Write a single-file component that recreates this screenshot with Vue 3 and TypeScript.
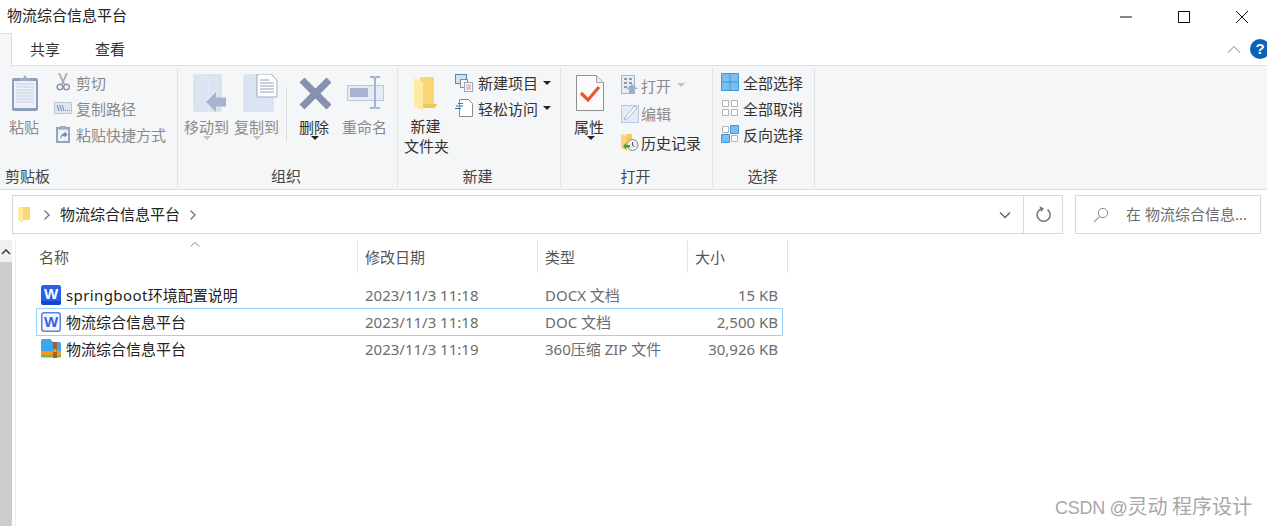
<script setup lang="ts">
interface Row { prefix?: string; name: string; date: string; type: string; size: string; kind: string; selected?: boolean }
const rows: Row[] = [
  { prefix: 'springboot', name: '环境配置说明', date: '2023/11/3 11:18', type: 'DOCX 文档', size: '15 KB', kind: 'docx' },
  { name: '物流综合信息平台', date: '2023/11/3 11:18', type: 'DOC 文档', size: '2,500 KB', kind: 'doc', selected: true },
  { name: '物流综合信息平台', date: '2023/11/3 11:19', type: '360压缩 ZIP 文件', size: '30,926 KB', kind: 'zip' },
]
const columns = [
  { label: '名称', cls: 'c-name' },
  { label: '修改日期', cls: 'c-date' },
  { label: '类型', cls: 'c-type' },
  { label: '大小', cls: 'c-size' },
]
</script>

<template>
  <div class="window">
    <header class="titlebar">
      <span class="title">物流综合信息平台</span>
      <div class="controls">
        <span class="ctl"><svg width="14" height="14" viewBox="0 0 14 14"><path d="M1 7h12" stroke="#111" fill="none" /></svg></span>
        <span class="ctl"><svg width="14" height="14" viewBox="0 0 14 14"><rect x="1.5" y="1.5" width="11" height="11" stroke="#111" fill="none" /></svg></span>
        <span class="ctl"><svg width="14" height="14" viewBox="0 0 14 14"><path d="M1 1l12 12M13 1L1 13" stroke="#111" fill="none" /></svg></span>
      </div>
    </header>

    <nav class="tabs">
      <span class="tab-stub"></span>
      <span class="tab first">共享</span>
      <span class="tab">查看</span>
      <span class="tabs-right">
        <svg class="collapse" width="14" height="8" viewBox="0 0 14 8"><path d="M1 7.5L7 1.5l6 6" stroke="#b5b5b5" fill="none" stroke-width="1.2" /></svg>
        <span class="help">?</span>
      </span>
    </nav>

    <section class="ribbon">
      <!-- 剪贴板 -->
      <div class="group g-clip">
        <div class="group-body">
          <div class="big dim w48">
            <svg width="48" height="41" viewBox="0 74 48 41">
              <rect x="12" y="78" width="26" height="33" rx="2" fill="#8d9dbd" />
              <rect x="14" y="81" width="22" height="27" fill="#edf0f7" />
              <path d="M16 84h18M16 87h18M16 90h18M16 93h18M16 96h18M16 99h18M16 102h18" stroke="#c8d0e2" />
              <path d="M20 80v-2h3l2-3 2 3h3v3H20z" fill="#9fadc8" />
            </svg>
            <span class="lbl">粘贴</span>
          </div>
          <div class="smalls s26 clip-smalls">
            <div class="small dim">
              <svg class="ic" viewBox="0 0 18 18"><path d="M5 0l5 11M13 0L8 11" stroke="#a4a9b3" stroke-width="1.8" fill="none" /><circle cx="6" cy="14" r="2.8" stroke="#8d96a8" stroke-width="1.5" fill="none" /><circle cx="12.5" cy="14" r="2.8" stroke="#8d96a8" stroke-width="1.5" fill="none" /></svg>
              <span>剪切</span>
            </div>
            <div class="small dim">
              <svg class="ic" viewBox="0 0 18 18"><rect x=".5" y="3.5" width="17" height="11" fill="#dde5f1" stroke="#b9c5da" /><path d="M3 6l2 6M5.5 6l2 6M8 6l2 6" stroke="#7c89a5" fill="none" /><path d="M11 11.5h1M13 11.5h1M15 11.5h1" stroke="#7c89a5" /></svg>
              <span>复制路径</span>
            </div>
            <div class="small dim">
              <svg class="ic" viewBox="0 0 18 18"><rect x="2" y="2" width="14" height="16" fill="#94a5c2" /><rect x="4" y="4.5" width="10" height="11.5" fill="#eef1f7" /><path d="M6 1h6v3H6z" fill="#9eadc8" /><path d="M6.5 14c0-4 2-5.500 4-5.500V6.500l3 3-3 3v-2c-1.500 0-3 1-4 3.500z" fill="#6f83a8" /></svg>
              <span>粘贴快捷方式</span>
            </div>
          </div>
        </div>
        <div class="group-label left">剪贴板</div>
      </div>

      <!-- 组织 -->
      <div class="group g-org">
        <div class="group-body">
          <div class="big dim w45">
            <svg width="45" height="41" viewBox="184 74 45 41">
              <path d="M194 75h27v36h-27z" fill="#dbe4f2" stroke="#cfdaeb" />
              <path d="M196 75l12 3v33" fill="none" stroke="#e6edf7" />
              <path d="M206 102l10-10v5.500h10v9h-10v5.500z" fill="#a6b4cf" />
            </svg>
            <span class="lbl">移动到</span>
            <i class="caret gray"></i>
          </div>
          <div class="big dim w45 ml5">
            <svg width="45" height="41" viewBox="234 74 45 41">
              <path d="M244 75h29v36h-29z" fill="#dbe4f2" stroke="#cfdaeb" />
              <path d="M257 74h14l6 6v17h-20z" fill="#fff" stroke="#9aa9c5" />
              <path d="M260 80h9M260 83h14M260 86h14M260 89h14M260 92h14" stroke="#8fa0bf" />
            </svg>
            <span class="lbl">复制到</span>
            <i class="caret gray"></i>
          </div>
          <span class="vsep"></span>
          <div class="big w30">
            <svg width="34" height="41" viewBox="297 74 34 41">
              <path d="M302 80l27 27M329 80l-27 27" stroke="#8591ad" stroke-width="7" fill="none" />
            </svg>
            <span class="lbl">删除</span>
            <i class="caret nudge1"></i>
          </div>
          <div class="big dim w45 ml13">
            <svg width="45" height="41" viewBox="342 74 45 41">
              <rect x="347.500" y="85.500" width="36" height="15" fill="#e6ecf6" stroke="#bac7de" />
              <rect x="350" y="88" width="18" height="9" fill="#a6b4cf" />
              <path d="M370 77h3c1 0 2 1 2 2 0-1 1-2 2-2h3M370 108h3c1 0 2-1 2-2 0 1 1 2 2 2h3M375 79v27" fill="none" stroke="#a6b4cf" stroke-width="2" />
            </svg>
            <span class="lbl">重命名</span>
          </div>
        </div>
        <div class="group-label">组织</div>
      </div>

      <!-- 新建 -->
      <div class="group g-new">
        <div class="group-body">
          <div class="big w45">
            <svg width="45" height="41" viewBox="404 74 45 41">
              <path d="M420 77h14v30h3v-3l-3 3h-20l6-30z" fill="#fde08a" />
              <path d="M420 77h14v31h-14z" fill="#f9d874" />
              <path d="M414 78l9 5v28l-9-5z" fill="#ffe9a6" />
              <path d="M423 104h14l-3 4h-11z" fill="#efc65e" />
            </svg>
            <span class="lbl tight"><span class="first-line">新建</span>文件夹</span>
          </div>
          <div class="smalls s25 new-smalls">
            <div class="small">
              <svg class="ic" viewBox="0 0 18 18"><rect x=".5" y=".5" width="11" height="9" fill="#cfe0ee" stroke="#4d8cb8" /><rect x="5.500" y="5.500" width="7" height="8" fill="#f4f4f4" stroke="#8a8a8a" /><rect x="9.500" y="8.500" width="8" height="9" fill="#fff" stroke="#98a6c4" /><path d="M11 11h5M11 13h5M11 15h5" stroke="#d08a8a" /></svg>
              <span>新建项目</span><i class="caret inline"></i>
            </div>
            <div class="small">
              <svg class="ic" viewBox="0 0 18 18"><path d="M4.500.5h9l4 4v13h-13z" fill="#fff" stroke="#8a8a8a" /><path d="M1 7h7M3 4.500h5M0 9.500h6" stroke="#2c74b5" fill="none" /></svg>
              <span>轻松访问</span><i class="caret inline"></i>
            </div>
          </div>
        </div>
        <div class="group-label">新建</div>
      </div>

      <!-- 打开 -->
      <div class="group g-open">
        <div class="group-body">
          <div class="big w38">
            <svg width="38" height="41" viewBox="570 74 38 41">
              <path d="M576.500 75.500h20l7 7v28h-27z" fill="#fbfbfb" stroke="#8f8f8f" />
              <path d="M596.500 75.500v7h7" fill="#e8e8e8" stroke="#a5a5a5" />
              <path d="M581 93l7 7 11-13" stroke="#e8592b" stroke-width="3.200" fill="none" />
            </svg>
            <span class="lbl">属性</span>
            <i class="caret nudge2"></i>
          </div>
          <div class="smalls s28 open-smalls">
            <div class="small dim">
              <svg class="ic tall" viewBox="0 0 18 20"><rect x=".5" y=".5" width="13" height="18" fill="#e6ebf4" stroke="#a7b5cf" /><path d="M3 4h3M3 8h3M3 12h3M8 4h3M8 8h3" stroke="#8b9ab8" stroke-width="2" /><path d="M11 9l6 5h-3v5h-6v-5H5z" fill="#9fb0cd" /></svg>
              <span>打开</span><i class="caret inline gray"></i>
            </div>
            <div class="small dim">
              <svg class="ic" viewBox="0 0 18 18"><path d="M.5.500h12l5 0v17H.5z" fill="#e5ebf5" stroke="#bcc8de" /><path d="M3 15l2-4 9-10 2 2-9 10z" fill="#fff" stroke="#a7b5cf" /></svg>
              <span>编辑</span>
            </div>
            <div class="small">
              <svg class="ic" viewBox="0 0 18 18"><path d="M0 1l6 2v15l-6-3z" fill="#f9d874" /><path d="M5 1h6v8H5z" fill="#f4ca63" /><circle cx="11.500" cy="12" r="5.500" fill="#eee" stroke="#8b8b8b" /><path d="M11.500 9v3.500l2 1" stroke="#555" fill="none" /><path d="M2 13l3-3v2h4v2.500H5v2z" fill="#3aa63a" /></svg>
              <span>历史记录</span>
            </div>
          </div>
        </div>
        <div class="group-label">打开</div>
      </div>

      <!-- 选择 -->
      <div class="group g-sel">
        <div class="group-body">
          <div class="smalls s26 sel-smalls">
            <div class="small">
              <svg class="ic" viewBox="0 0 18 18"><path d="M.5.500h17v17H.5zM9 .5v17M.5 9h17" fill="#7cbcee" stroke="#3a99e0" /></svg>
              <span>全部选择</span>
            </div>
            <div class="small">
              <svg class="ic" viewBox="0 0 18 18"><path d="M1.500 1.500h6v6h-6zM10.500 1.500h6v6h-6zM1.500 10.500h6v6h-6zM10.500 10.500h6v6h-6z" fill="#fff" stroke="#b3b3b3" /></svg>
              <span>全部取消</span>
            </div>
            <div class="small">
              <svg class="ic" viewBox="0 0 18 18"><path d="M1.500 1.500h6v6h-6zM10.500 10.500h6v6h-6z" fill="#fff" stroke="#b3b3b3" /><path d="M9.500.5h8v8h-8zM.5 9.500h8v8h-8z" fill="#7cbcee" stroke="#3a99e0" /></svg>
              <span>反向选择</span>
            </div>
          </div>
        </div>
        <div class="group-label">选择</div>
      </div>
    </section>

    <div class="addressbar">
      <div class="address">
        <svg class="addr-folder" width="13" height="17" viewBox="0 0 13 17"><path d="M3 1h9v13H3z" fill="#f9d874" /><path d="M0 1l5 2v14l-5-3z" fill="#ffe9a6" /></svg>
        <svg class="chev" width="8" height="12" viewBox="0 0 8 12"><path d="M1.500 1.500L6 6l-4.500 4.500" stroke="#777" stroke-width="1.400" fill="none" /></svg>
        <span class="crumb">物流综合信息平台</span>
        <svg class="chev end" width="8" height="12" viewBox="0 0 8 12"><path d="M1.500 1.500L6 6l-4.500 4.500" stroke="#777" stroke-width="1.400" fill="none" /></svg>
        <span class="addr-spacer"></span>
        <span class="addr-btn down"><svg width="12" height="8" viewBox="0 0 12 8"><path d="M1 1.500l5 5 5-5" stroke="#666" stroke-width="1.500" fill="none" /></svg></span>
        <span class="addr-btn refresh"><svg width="16" height="17" viewBox="0 0 16 17"><path d="M6 2.500A6.500 6.500 0 1 0 11.500 3.500" stroke="#7a7a7a" stroke-width="1.600" fill="none" /><path d="M3.500 0L8 2.500 5 6z" fill="#7a7a7a" /></svg></span>
      </div>
      <div class="search">
        <svg width="16" height="16" viewBox="0 0 16 16"><circle cx="10" cy="6" r="4.700" stroke="#8a8a8a" fill="none" /><path d="M6.500 9.500L1 15" stroke="#c09a78" stroke-width="1.200" /></svg>
        <span class="search-text">在 物流综合信息...</span>
      </div>
    </div>

    <main class="content">
      <aside class="nav">
        <div class="scroll-up"><svg width="10" height="7" viewBox="0 0 10 7"><path d="M1 6l4-4 4 4" stroke="#444" stroke-width="1.600" fill="none" /></svg></div>
        <div class="scroll-thumb"></div>
      </aside>
      <section class="list">
        <div class="list-head">
          <div v-for="c in columns" :key="c.label" class="col" :class="c.cls">{{ c.label }}</div>
          <svg class="sort" width="10" height="5" viewBox="0 0 10 5"><path d="M.5 4.500L5 .5l4.500 4" stroke="#8a8a8a" fill="none" /></svg>
        </div>
        <div class="rows">
          <div v-for="r in rows" :key="r.kind" class="row" :class="{ selected: r.selected }">
            <div class="cell-name">
              <svg v-if="r.kind === 'docx'" width="20" height="20" viewBox="0 0 20 20">
                <rect width="20" height="20" rx="2.500" fill="#2b5fe8" />
                <path d="M0 16h20v1.500A2.500 2.500 0 0 1 17.500 20h-15A2.500 2.500 0 0 1 0 17.500z" fill="#1a44c4" />
                <text x="10" y="13.500" class="w-letter w-white">W</text>
              </svg>
              <svg v-else-if="r.kind === 'doc'" width="20" height="20" viewBox="0 0 20 20">
                <rect x=".75" y=".75" width="18.500" height="18.500" rx="2.500" fill="#f4f6ff" stroke="#5a7fe8" stroke-width="1.500" />
                <text x="10" y="14.500" class="w-letter w-blue">W</text>
              </svg>
              <svg v-else width="20" height="20" viewBox="0 0 20 20">
                <path d="M0 1.500A1.500 1.500 0 0 1 1.500 0h8L12 3h6.500A1.500 1.500 0 0 1 20 4.500V12H0z" fill="#3fa5ec" />
                <path d="M0 12h20v4H0z" fill="#f09a20" />
                <path d="M0 16h20v1.500a1 1 0 0 1-1 1H1a1 1 0 0 1-1-1z" fill="#6cbd3d" />
                <path d="M12 3h4v16h-4z" fill="#a8601e" />
                <path d="M12.500 10h3v3h-3z" fill="#e8a33a" />
              </svg>
              <span><span v-if="r.prefix" class="latin">{{ r.prefix }}</span>{{ r.name }}</span>
            </div>
            <div class="cell-date">{{ r.date }}</div>
            <div class="cell-type">{{ r.type }}</div>
            <div class="cell-size">{{ r.size }}</div>
          </div>
        </div>
      </section>
    </main>

    <div class="watermark"><span class="wm-latin">CSDN @</span>灵动 程序设计</div>
  </div>
</template>

<style>
html, body { margin: 0; background: #fff; }
</style>

<style scoped>
.window {
  position: relative;
  width: 1267px;
  height: 526px;
  overflow: hidden;
  background: #fff;
  color: #333;
  font-family: "Noto Sans", "Noto Sans CJK SC", sans-serif;
  font-size: 15px;
}
.titlebar { height: 33px; display: flex; align-items: center; justify-content: space-between; box-sizing: border-box; }
.title { padding-left: 7px; color: #222; line-height: 32px; margin-bottom: 4px; }
.controls { display: flex; margin-right: -4px; height: 30px; }
.ctl { width: 58px; display: flex; align-items: center; justify-content: center; }

.tabs { height: 33px; box-sizing: border-box; border-bottom: 1px solid #dcdfe3; display: flex; align-items: center; position: relative; }
.tab-stub { width: 11px; height: 33px; box-sizing: content-box; background: #f5f6f7; border-top: 1px solid #dcdfe3; border-right: 1px solid #dcdfe3; margin-bottom: -1px; }
.tab { margin-left: 35px; line-height: 32px; }
.tab.first { margin-left: 18px; }
.tabs-right { margin-left: auto; display: flex; align-items: center; margin-right: -3px; }
.collapse { margin-right: 9px; }
.help { width: 20px; height: 20px; border-radius: 50%; background: #0a63b8; color: #fff; font: bold 15px/20px "Liberation Sans", sans-serif; text-align: center; }

.ribbon { height: 124px; box-sizing: border-box; background: #f5f6f7; border-bottom: 1px solid #dcdfe3; display: flex; }
.group { box-sizing: border-box; display: flex; flex-direction: column; position: relative; border-right: 1px solid #e1e3e6; margin: 2px 0; }
.g-clip { width: 178px; }
.g-org { width: 220px; padding-left: 6px; }
.g-new { width: 163px; padding-left: 6px; }
.g-open { width: 152px; padding-left: 9px; }
.g-sel { width: 102px; padding-left: 8px; }
.group-body { height: 98px; display: flex; align-items: flex-start; }
.group-label { height: 22px; line-height: 22px; text-align: center; color: #444; }
.g-org .group-label { margin-left: -6px; padding-right: 3px; }
.g-new .group-label { margin-left: -6px; padding-right: 3px; }
.g-open .group-label { margin-left: -9px; padding-right: 2px; }
.g-sel .group-label { margin-left: -8px; padding-right: 2px; }
.group-label.left { text-align: left; padding-left: 5px; }

.big { display: flex; flex-direction: column; align-items: center; padding-top: 6px; position: relative; flex: none; }
.big svg { display: block; flex: none; }
.w48 { width: 48px; }
.w45 { width: 45px; }
.w38 { width: 38px; }
.w30 { width: 30px; }
.w30 svg { margin: 0 -2px; }
.ml5 { margin-left: 5px; }
.ml13 { margin-left: 13px; }
.lbl { line-height: 20px; margin-top: 2px; white-space: nowrap; text-align: center; }
.lbl.tight { margin-top: 1px; }
.first-line { display: block; padding-right: 2px; }
.dim { color: #8a8a8a; }
.caret { display: block; width: 0; height: 0; border-left: 4px solid transparent; border-right: 4px solid transparent; border-top: 4px solid #222; margin-top: -1px; }
.caret.gray { border-top-color: #c2c2c2; }
.caret.nudge1 { margin-left: 2px; }
.caret.nudge2 { margin-left: 4px; }
.caret.inline { display: inline-block; margin: 0; }
.s28 .caret.inline { margin-left: 4px; }

.vsep { width: 1px; height: 55px; background: #dcdfe3; margin: 19px 12px 0 7px; flex: none; }

.smalls { display: flex; flex-direction: column; }
.small { display: flex; align-items: center; white-space: nowrap; }
.ic { width: 18px; height: 18px; flex: none; }
.ic.tall { height: 20px; }
.s26 { padding-top: 1px; }
.s26 .small { height: 26px; gap: 4px; }
.s25 { padding-top: 2px; }
.s25 .small { height: 25.500px; gap: 5px; }
.s28 { padding-top: 3px; }
.s28 .small { height: 28.500px; gap: 2px; }
.clip-smalls { margin-left: 6px; }
.new-smalls { margin-left: 6px; }
.open-smalls { margin-left: 13px; }

.addressbar { height: 50px; box-sizing: border-box; padding: 5px 6px 5px 12px; display: flex; gap: 12px; }
.address { flex: none; width: 1051px; height: 39px; box-sizing: border-box; border: 1px solid #d9d9d9; display: flex; align-items: center; padding-left: 5px; }
.chev { margin-left: 12px; }
.chev.end { margin-left: 9px; }
.crumb { margin-left: 9px; color: #222; line-height: 34px; margin-bottom: 2px; }
.addr-spacer { flex: 1; }
.addr-btn { display: flex; align-items: center; justify-content: center; height: 100%; }
.down { width: 37px; box-sizing: border-box; }
.refresh { width: 39px; box-sizing: border-box; padding-left: 2px; border-left: 1px solid #d9d9d9; }
.search { width: 186px; height: 39px; box-sizing: border-box; border: 1px solid #d9d9d9; display: flex; align-items: center; padding-left: 17px; gap: 17px; color: #6d6d6d; white-space: nowrap; }
.search-text { margin-bottom: 2px; }

.content { display: flex; height: 286px; }
.nav { width: 15px; flex: none; border-right: 1px solid #eee; box-sizing: content-box; display: flex; flex-direction: column; }
.scroll-up { width: 12px; height: 22px; display: flex; align-items: center; justify-content: center; background: #f0f0f0; }
.scroll-thumb { width: 12px; flex: 1; background: #cdcdcd; }
.list { flex: 1; }
.list-head { display: flex; height: 33px; position: relative; }
.col { box-sizing: border-box; height: 33px; line-height: 34px; padding-left: 7px; border-right: 1px solid #e5e5e5; color: #555; }
.c-name { width: 342px; padding-left: 23px; }
.c-date { width: 180px; }
.c-type { width: 150px; }
.c-size { width: 100px; }
.sort { position: absolute; left: 174px; top: 2px; }
.rows { padding: 8px 0 0 20px; width: 747px; box-sizing: content-box; }
.row { height: 27px; box-sizing: border-box; display: flex; align-items: center; color: #6d6d6d; }
.row.selected { border: 1px solid #99d1ff; height: 28px; padding-bottom: 1px; }
.row.selected + .row { margin-top: -1px; }
.row.selected .cell-name { margin-left: -1px; }
.cell-name { width: 321px; padding-left: 5px; box-sizing: border-box; display: flex; align-items: center; gap: 5px; color: #222; white-space: nowrap; flex: none; }
.cell-name svg { flex: none; }
.latin { letter-spacing: .4px; }
.cell-date { width: 180px; flex: none; box-sizing: border-box; padding-left: 8px; }
.cell-type { width: 150px; flex: none; box-sizing: border-box; padding-left: 8px; white-space: nowrap; }
.cell-size { width: 91px; flex: none; text-align: right; white-space: nowrap; }
.w-letter { font: bold 15px "Liberation Sans", sans-serif; text-anchor: middle; }
.w-white { fill: #fff; }
.w-blue { fill: #3562e0; }

.watermark { position: absolute; right: 15px; bottom: 5px; color: #a8a8a8; font-family: "Noto Sans CJK SC", sans-serif; font-size: 20px; line-height: 26px; white-space: nowrap; }
.wm-latin { font-family: "Liberation Sans", sans-serif; font-size: 18px; letter-spacing: -.3px; }
</style>
